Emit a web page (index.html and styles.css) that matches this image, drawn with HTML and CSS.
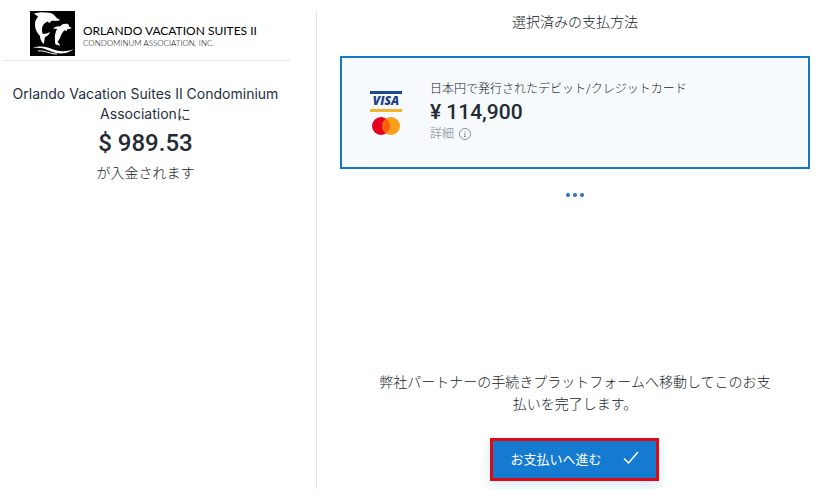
FILE: index.html
```html
<!DOCTYPE html>
<html lang="ja">
<head>
    <meta charset="UTF-8">
    <meta name="viewport" content="width=device-width, initial-scale=1.0">
    <title>お支払い</title>
    <link rel="stylesheet" href="styles.css">
</head>
<body>
    <div class="checkout">
        <aside class="summary">
            <header class="brand">
                <svg class="brand-mark" viewBox="0 0 45 45" aria-hidden="true">
                    <rect width="45" height="45"/>
                    <path class="white" d="M4 2.500C8 2 10 1 14 1.500C19 1 23 2 25 5C26 7 29 8 30 9C28 10.500 24 9.500 21 10C20.500 12 19 12.500 18 10.500C14 12 12.500 14 12 18C12 20 12 22 13 23C16 23 18 22 20 21C19 24 17 25 15 26C14 28 15 31 13.500 33C11 30 10 28 10 25C7 22 5 18 5 14C5 10 6 8 8 6C7 4 5 4 4 2.500Z"/>
                    <path class="white" d="M23 18C25 15.500 28 15 30 15.500C32 13 35 12.500 38 13C39 14 39 15 39 15.500C40 16 42 16.500 41 17.500C39 18 38 18 37 18.500C37 20 36 21 35 19C32 21 31 24 30 27C29 29 28 30 27.500 31C29 32 30 34 30 35C28 34 27 33.500 26 34C25 33 25 31 25 29C24.500 26 25 22 27 18C26 17.500 25 17.500 23 18Z"/>
                    <path class="white" d="M3 37C10 34 17 36 22 38C30 41 36 41 44 38C36 44 27 43 20 40C14 37 9 36 3 37Z"/>
                    <path class="ripple" d="M8 40C15 39 19 43 27 43"/>
                </svg>
                <div class="brand-text">
                    <div class="brand-name">ORLANDO VACATION SUITES II</div>
                    <div class="brand-sub">CONDOMINUM ASSOCIATION, INC.</div>
                </div>
            </header>
            <p class="payee">Orlando Vacation Suites II Condominium Associationに</p>
            <p class="amount">$ 989.53</p>
            <p class="payee-note">が入金されます</p>
        </aside>

        <main class="payment">
            <h1>選択済みの支払方法</h1>
            <section class="method">
                <div class="card-logos">
                    <svg viewBox="0 0 32 46" role="img" aria-label="VISA / Mastercard">
                        <path fill="#1b4a94" d="M0 0h32v3H0z"/>
                        <path fill="#f3b52e" d="M0 18h32v3H0z"/>
                        <text class="visa" x="16" y="14" text-anchor="middle">VISA</text>
                        <circle cx="11" cy="35" r="9" fill="#e6001f"/>
                        <circle cx="21" cy="35" r="9" fill="#f79f1a"/>
                        <path fill="#fb5f08" d="M16 27.500a9 9 0 0 1 0 15a9 9 0 0 1 0 -15z"/>
                    </svg>
                </div>
                <div class="method-info">
                    <h2>日本円で発行されたデビット/クレジットカード</h2>
                    <p class="price">¥ 114,900</p>
                    <a class="details" href="#details">詳細
                        <svg viewBox="0 0 12 12" aria-hidden="true">
                            <circle cx="6" cy="6" r="5.500"/>
                            <path d="M5 5.500h1v3M5 8.500h2M5.500 3.500h1"/>
                        </svg>
                    </a>
                </div>
            </section>
            <button class="more" type="button" aria-label="その他の支払方法"><i></i><i></i><i></i></button>
            <p class="notice">弊社パートナーの手続きプラットフォームへ移動してこのお支払いを完了します。</p>
            <button class="proceed" type="button">お支払いへ進む
                <svg viewBox="0 0 16 14" aria-hidden="true"><path d="M1 7.500L5.500 12L15 1"/></svg>
            </button>
        </main>
    </div>
</body>
</html>
```
FILE: styles.css
```css
* {
    box-sizing: border-box;
}
body {
    margin: 0;
    background-color: #fff;
    color: #131c28;
    font-family: Roboto, "Noto Sans CJK JP", sans-serif;
    font-size: 14px;
    font-weight: 300;
}
h1, h2, p {
    margin: 0;
    font-weight: 300;
}
button {
    border: 0;
    padding: 0;
    font-family: inherit;
    cursor: pointer;
}
.checkout {
    display: grid;
    grid-template-columns: 5fr 8fr;
    padding-top: 11px;
}
.summary {
    padding-right: 25px;
    border-right: 1px solid #e6e6e6;
    text-align: center;
}
.brand {
    display: flex;
    align-items: center;
    gap: 8px;
    margin-left: 3px;
    padding: 0 0 4px 27px;
    border-bottom: 1px solid #e6e6e6;
    text-align: left;
    white-space: nowrap;
}
.brand-mark {
    width: 45px;
    height: 45px;
}
.brand-mark .white {
    fill: #fff;
}
.brand-mark .ripple {
    fill: none;
    stroke: #fff;
}
.brand-text {
    padding-top: 4px;
    color: #000;
    font-family: Lato, sans-serif;
}
.brand-name {
    font-size: 12px;
    font-weight: 400;
    line-height: 14px;
}
.brand-sub {
    font-size: 8px;
    line-height: 10px;
}
.payee {
    margin-top: 23px;
    color: #232f3e;
    font-family: Inter, "Noto Sans CJK JP", sans-serif;
    line-height: 20px;
    font-weight: 400;
}
.amount {
    margin-top: 4px;
    color: #232a33;
    font-size: 24px;
    line-height: 30px;
    font-weight: 500;
}
.payee-note {
    margin-top: 5px;
    line-height: 20px;
}
.payment {
    display: flex;
    flex-direction: column;
    align-items: center;
    padding: 0 14px 8px 23px;
}
h1 {
    font-size: 14px;
    line-height: 22px;
}
.method {
    display: flex;
    align-self: stretch;
    gap: 28px;
    margin-top: 23px;
    padding: 21px 28px 24px;
    background-color: #f6fafd;
    border: 2px solid #1678c2;
}
.card-logos {
    padding-top: 12px;
}
.card-logos svg {
    display: block;
    width: 32px;
    height: 46px;
}
.visa {
    fill: #1b3f86;
    font: italic 900 12px "Open Sans", sans-serif;
}
h2 {
    font-size: 12px;
    line-height: 20px;
}
.price {
    color: #232a33;
    font-size: 21px;
    line-height: 26px;
    font-weight: 500;
}
.details {
    display: flex;
    align-items: center;
    gap: 5px;
    color: #77818b;
    font-size: 12px;
    line-height: 18px;
    text-decoration: none;
}
.details svg {
    width: 12px;
    height: 12px;
    fill: none;
    stroke: #87919b;
}
.more {
    display: flex;
    gap: 3px;
    margin-top: 20px;
    padding: 4px;
    background: none;
}
.more i {
    width: 4px;
    height: 4px;
    border-radius: 50%;
    background-color: #2a72b8;
}
.notice {
    max-width: 400px;
    margin-top: 170px;
    line-height: 22px;
    text-align: center;
}
.proceed {
    display: flex;
    align-items: center;
    gap: 22px;
    margin-top: 23px;
    padding: 0 17px 3px;
    height: 43px;
    background-color: #157bd1;
    border: 3px solid #dc0a14;
    box-shadow: 0 5px 12px rgba(21, 123, 209, 0.16);
    color: #fff;
    font-size: 13px;
}
.proceed svg {
    width: 16px;
    height: 14px;
    fill: none;
    stroke: #fff;
    stroke-width: 1.5;
}
```
